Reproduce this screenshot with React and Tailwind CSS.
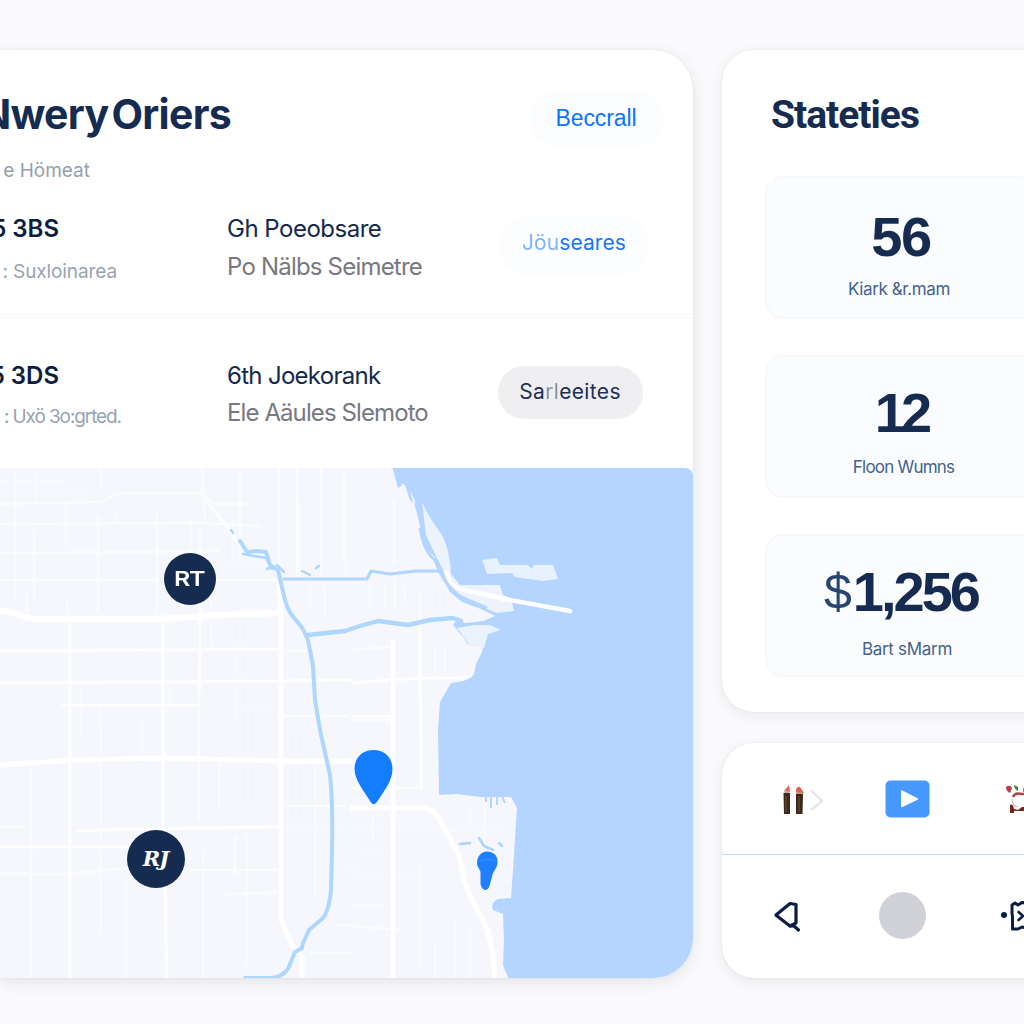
const orders = [
  {
    id: "15 3BS",
    sub: "c : Suxloinarea",
    subClass: "mt-[22.5px] tracking-[-0.1px]",
    name: "Gh Poeobsare",
    nameClass: "tracking-[-0.5px]",
    place: "Po Nälbs Seimetre",
    placeClass: "tracking-[-0.8px]",
  },
  {
    id: "15 3DS",
    sub: "c : Uxö 3o:grted.",
    subClass: "mt-[21px] mr-[-4px] tracking-[-1.1px]",
    name: "6th Joekorank",
    nameClass: "tracking-[-0.7px]",
    place: "Ele Aäules Slemoto",
    placeClass: "tracking-[-0.9px]",
  },
];

function OrderRow({ order, children }) {
  return (
    <div className="flex h-[60px]">
      <div className="flex w-[59px] shrink-0 flex-col items-end whitespace-nowrap">
        <div className="text-[24px] leading-5 font-semibold text-[#0b1d40]">{order.id}</div>
        <div className="-mr-[58px]">
          <div className={"text-[19px] leading-5 text-[#98a2b3] " + order.subClass}>{order.sub}</div>
        </div>
      </div>
      <div className="ml-[168px] w-[270px] shrink-0 whitespace-nowrap text-[24px]">
        <div className={"leading-5 text-[#14294b] " + order.nameClass}>{order.name}</div>
        <div className={"mt-[17.5px] leading-5 text-[#777882] " + order.placeClass}>{order.place}</div>
      </div>
      {children}
    </div>
  );
}

function CityMap() {
  return (
    <svg viewBox="0 468 693 510" className="block h-[510px] w-[693px]" fill="none">
      <defs>
        <filter id="soft" x="-5%" y="-5%" width="110%" height="110%">
          <feGaussianBlur stdDeviation="0.6" />
        </filter>
      </defs>
      <rect x="0" y="468" width="693" height="510" fill="#f5f7fc" />
      <g filter="url(#soft)">
        <g stroke="#ffffff" strokeWidth="1.6" opacity="0.4">
          <path d="M0 481H70M0 490H88M36 468V500M66 500V548M116 512V525M67 600V620M157 510V535M191 520V550M211 590V646M240 620V706M232 520V560M100 706V725M248 706V806M142 720V755M219 760V810M101 722V806M203 850V978M126 880V978M101 806V935M247 835V965M296 735V820M315 760V900M0 828H30M0 875H125M280 826H345M344 870H365M310 575V612M325 585V620M300 500V580M346 480V575" />
          <path d="M15 468V600M81 690V740M60 705H75M52 706H72M220 565H280M236 640V720M230 706H275M222 895H277M170 690V716M352 830H460M352 878H430M430 530V560M420 640V690M435 645V680M445 645V675M370 585V610M385 585V610M405 585V605M440 590V612M373 810V840M420 860V965M435 940V978M455 920V978M470 925V978M360 760H390M485 800V850M470 805V830M356 850H392M352 905H392M396 820H435M480 880H510M455 830H510" />
        </g>
        <g stroke="#ffffff" strokeWidth="2.4" opacity="0.6">
          <path d="M0 504L100 502L120 493H202L215 504H250M0 524L200 523L260 526M0 553L150 552L220 550M0 580H280M101 468V487M98 515V612M34 530V600M27 590V612M202 468L205 523M200 530V560M240 468V560M279 468V580M297 468V580M321 468V575M344 468V560M157 528V612M31 768V978M199 660V820M235 835V875M0 873L60 874L130 868M190 870H280M225 894L278 892M0 827H25M335 925H352M285 806H345M352 788H420M352 926L400 930M350 650L392 647M282 651H310M312 681H350M350 720H392M277 716H350M310 953H350M394 500V565M395 570V610M420 590V725M422 470V500" />
        </g>
        <g stroke="#ffffff" strokeWidth="3" opacity="0.85">
          <path d="M0 651L140 650L280 649M0 683L280 681L352 680M60 705H200M70 623V978M163 620V770M200 590V690M0 847H130M75 831L130 829L280 827M165 885L167 978M163 760V828M352 683L420 678H460L471 676M352 716H394M420 630L421 790" />
        </g>
        <g stroke="#ffffff" strokeLinejoin="round">
          <path d="M0 611C14 610 22 619 36 619L160 619L240 614L281 613" strokeWidth="6.5" />
          <path d="M0 765L75 760L165 758L280 761L352 761" strokeWidth="5" />
          <path d="M279 580L281 615V920L292 945L302 956V978M393 640V978" strokeWidth="5" />
          <path d="M350 808H424Q435 809 441 822L459 855C463 871 464 885 471 898L485 924Q493 942 495 978" strokeWidth="5" />
          <path d="M205 500L222 520L239 544" strokeWidth="3" opacity="0.7" />
        </g>
        <g stroke="#afd6fc" strokeLinecap="round" strokeLinejoin="round">
          <path d="M240 541L247 552L257 551L266 552L270 565L278 570L281 583L285 600C289 616 297 620 303 629L308 640L313 666L315 700L320 730L330 775Q333 800 332 850L331 890Q329 912 322 919L309 930L303 943L302 948L295 952L288 969Q281 978 270 978H245" strokeWidth="4" />
          <path d="M243 554L254 556L266 558L272 569M277 565L284 572M302 571L310 575M316 568L319 566M231 530L233 533M267 569L272 567" strokeWidth="2.5" />
          <path d="M284 579H367L371 571L390 574L416 571H438L447 576" strokeWidth="3.2" />
          <path d="M308 635L345 631L360 626L378 621L408 625L430 620L453 618L461 621" strokeWidth="4.4" />
        </g>
        <path
          d="M392 466L398 488L403 485L410 500L415 506L421 530L425 548L435 557L440 573L450 592L462 602L481 609L495 616L483 621L466 623L456 621L453 625L464 638L468 645L475 634L486 633L482 652L476 664L474 674Q471 681 451 683L440 702L438 730L439 795L457 794L480 797H511L517 808L513 870L511 898L498 899Q490 903 493 910L503 914L504 940L503 965L509 980H695V466Z"
          fill="#b3d5ff"
        />
        <path d="M457 628L475 625L490 625L501 630L488 634L484 648L470 646L461 633Z" fill="#eaf2fd" />
        <path d="M422 502L429 516L443 537Q450 552 451 574L460 585L500 585L503 595L511 598L514 611L497 613L482 607L467 600Q453 591 447 578L435 554L426 535Z" fill="#edf3fd" />
        <path d="M401 483L405 485L412 507L408 505ZM410 490L415 501L414 508Z" fill="#f4f6fc" />
        <path d="M420 528Q424 552 435 560Q442 580 455 594L487 608" stroke="#b3d5ff" strokeWidth="3" />
        <path d="M446 572Q450 586 460 589L505 599L570 611" stroke="#ffffff" strokeWidth="4.5" strokeLinecap="round" />
        <path d="M482 560L497 558L500 565H528L532 569L534 565L553 565L558 579L543 581L515 577L512 573L487 574Z" fill="#e8f1fe" />
        <path d="M491 795V808M497 795V805M486 795V802M502 796L505 803" stroke="#b3d5ff" strokeWidth="2" />
        <path d="M479 838L484 846L493 850M460 844L470 843M499 843L502 846" stroke="#aed3fb" strokeWidth="2.5" strokeLinecap="round" />
      </g>
      <path d="M373.500 750C362 750 354.500 758 354.500 769C354.500 780 364 791 371 802.500Q374 806 377 802C386 788 392.500 780 392.500 769C392.500 758 385 750 373.500 750Z" fill="#147cff" />
      <path d="M487 851.500C481 851.500 477 857 477 863C477 867 480 869 480.500 872L480.500 884Q482 890 486 890Q489 889 490 884L493 873L496.500 867Q499 860 495.500 855Q492 851.500 487 851.500Z" fill="#207fff" />
      <path d="M481 861Q487 858 495 861" stroke="#3a90ff" strokeWidth="1.500" />
    </svg>
  );
}

function LipstickIcon() {
  return (
    <svg viewBox="780 778 46 36" className="h-9 w-[46px]">
      <path d="M784 788L789 782L790 789ZM796 787Q797 783 800 784L804 790H796Z" fill="#e9604f" />
      <path d="M785 786L790 790V793H784ZM796 789L803 790V794H796Z" fill="#b6a69a" />
      <path d="M783.500 790H790V811H784ZM796 791H803L802.500 811H796Z" fill="#3d2819" />
      <path d="M786 793V809M799 793V809" stroke="#6b4b34" strokeWidth="1.200" />
      <path d="M811 787L822 798L811 807" stroke="#e6e6e6" strokeWidth="2.400" fill="none" />
    </svg>
  );
}

function PlayIcon() {
  return (
    <svg viewBox="885 779 45 38" className="h-[38px] w-[45px]">
      <rect x="885.500" y="779.500" width="44" height="37" rx="5" fill="#4798ff" />
      <path d="M901.500 789.500L918 798L901.500 806Z" fill="#fff" stroke="#fff" strokeWidth="1" strokeLinejoin="round" />
    </svg>
  );
}

function DessertIcon() {
  return (
    <svg viewBox="1004 780 40 34" className="h-[34px] w-10">
      <path d="M1006 785Q1010 782 1012 786L1010 791Q1006 789 1006 785Z" fill="#bf3a45" />
      <path d="M1014 783L1018 785L1018 789Q1014 787 1014 783Z" fill="#3f8049" />
      <path d="M1023 786Q1028 783 1029 790L1023 790Z" fill="#e46a70" />
      <path d="M1013 795Q1015 790 1022 792L1030 792" stroke="#a8464a" strokeWidth="2.500" fill="none" />
      <path d="M1010 803Q1013 801 1014 807L1018 808L1022 805L1034 805V809L1014 809V811H1010Z" fill="#71261e" />
      <path d="M1012 797Q1012 804 1018 805" stroke="#d4bab6" strokeWidth="1.200" fill="none" />
    </svg>
  );
}

function BackIcon() {
  return (
    <svg viewBox="772 897 32 34" className="h-[34px] w-8" fill="none" stroke="#0b1d40" strokeWidth="3.200" strokeLinecap="round" strokeLinejoin="round">
      <path d="M776 913L790 901.500L796 902.500V921L790 924L777 914Z" />
      <path d="M790 924H794L798.500 928" />
    </svg>
  );
}

function TicketIcon() {
  return (
    <svg viewBox="1000 896 44 38" className="h-[38px] w-11" fill="none" stroke="#0b1d40" strokeWidth="3" strokeLinecap="round" strokeLinejoin="round">
      <circle cx="1004" cy="914" r="1.500" fill="#0b1d40" />
      <path d="M1012 904L1015 902L1018 904L1022 901.500L1030 902L1034 904V928L1026 927L1022 926L1018 928L1012.500 928V916L1012 912Z" />
      <path d="M1018.500 911L1023 915L1018.500 919" strokeWidth="2.600" />
    </svg>
  );
}

function Stat({ value, label, labelClass }) {
  return (
    <div className="flex h-[143px] w-[272px] flex-col items-center rounded-[18px] border-2 border-[#f7f8fa] bg-[#fbfcfe] whitespace-nowrap">
      {value}
      <div className={"text-[17px] leading-5 text-[#43638b] " + labelClass}>{label}</div>
    </div>
  );
}

const numberClass = "font-['Liberation_Sans',sans-serif] font-bold text-[#162b50] leading-[40px]";

export default function App() {
  return (
    <div className="h-[1024px] w-[1024px] overflow-hidden bg-[#fafafc] font-['Inter',sans-serif]">
      <div className="flex gap-[29px] pt-[50px]">
        <section className="h-[928px] w-[693px] shrink-0 overflow-hidden rounded-r-[40px] bg-white shadow-[0_4px_16px_rgba(30,35,50,0.10),0_0_2px_rgba(30,35,50,0.08)]">
          <header className="flex h-[168px] justify-between pt-[41px]">
            <div className="flex w-[231px] flex-col items-end whitespace-nowrap">
              <h1 className="mt-[3px] text-[41px] leading-10 font-bold tracking-[-0.7px] text-[#162b50] [word-spacing:-6px]">Nwery Oriers</h1>
              <p className="mt-[27px] mr-[141px] text-[19px] leading-5 text-[#959eae]">e Hömeat</p>
            </div>
            <button className="mr-[30px] flex h-[55px] w-[133px] items-center justify-center rounded-[24px] bg-[#fcfdff] pr-px pb-px font-['Liberation_Sans',sans-serif] text-[23px] tracking-[-0.1px] text-[#0b74ff]">
              Beccrall
            </button>
          </header>
          <div className="h-[96px] pt-px">
            <OrderRow order={orders[0]}>
              <button className="mt-[-3px] ml-[2px] flex h-[59px] w-[150px] items-center justify-center rounded-[28px] bg-[#fcfdff] pb-[6px] text-[21px] tracking-[0.1px] text-[#1676ff]">
                <span className="opacity-55">Jöu</span>seares
              </button>
            </OrderRow>
          </div>
          <div className="h-[4px] border-y border-[#f8f9fa]" />
          <div className="h-[100px] pt-[47.500px]">
            <OrderRow order={orders[1]}>
              <button className="ml-px flex h-[53px] w-[145px] items-center justify-center rounded-[26px] bg-[#efeff2] pr-px text-[21px] tracking-[0.35px] text-[#1e2f51]">
                Sa<span className="opacity-50">rl</span>eeites
              </button>
            </OrderRow>
          </div>
          <div className="relative mt-[50px] h-[510px] overflow-hidden rounded-tr-[8px]">
            <CityMap />
            <div className="absolute top-[84.5px] left-[163.500px] flex size-[52px] items-center justify-center rounded-full bg-[#162b50]">
              <span className="scale-x-125 text-[20px] font-semibold tracking-[-1px] text-white">RT</span>
            </div>
            <div className="absolute top-[361.500px] left-[126.500px] flex size-[58px] items-center justify-center rounded-full bg-[#162b50]">
              <span className="font-['DejaVu_Serif',serif] text-[21px] font-bold tracking-[-1px] text-white italic">RJ</span>
            </div>
          </div>
        </section>

        <div className="flex w-[360px] shrink-0 flex-col gap-[31px]">
          <section className="h-[662px] rounded-[32px] bg-white pl-[43px] shadow-[0_4px_14px_rgba(30,35,50,0.07),0_0_2px_rgba(30,35,50,0.08)]">
            <h2 className="pt-[45px] pl-[6px] font-['Roboto',sans-serif] text-[39px] leading-10 font-bold tracking-[-1px] text-[#162b50]">Stateties</h2>
            <div className="mt-[41px] flex flex-col gap-[36px]">
              <Stat
                label="Kiark &r.mam"
                labelClass="mt-[22px] tracking-[-0.4px] mr-[4px]"
                value={<div className={"mt-[38.500px] text-[56px] tracking-[-1.500px] " + numberClass}>56</div>}
              />
              <Stat
                label="Floon Wumns"
                labelClass="mt-[24px] tracking-[-0.8px] ml-[5px]"
                value={<div className={"mt-[36px] text-[56px] tracking-[-5px] " + numberClass}>12</div>}
              />
              <Stat
                label="Bart sMarm"
                labelClass="mt-[27px] tracking-[-0.3px] ml-[12px]"
                value={
                  <div className={"mt-[36px] flex text-[56px] " + numberClass}>
                    <span className="mr-px text-[50px] font-normal text-[#264670]">$</span>
                    <span className="tracking-[-3px]">1,256</span>
                  </div>
                }
              />
            </div>
          </section>
          <section className="h-[235px] rounded-[32px] bg-white shadow-[0_4px_14px_rgba(30,35,50,0.08),0_0_2px_rgba(30,35,50,0.10)]">
            <div className="flex h-[112px] items-center border-b border-[#c8d8ea] pl-[58px]">
              <LipstickIcon />
              <div className="ml-[59px]"><PlayIcon /></div>
              <div className="ml-[74px]"><DessertIcon /></div>
            </div>
            <div className="flex h-[121px] items-center pl-[50px]">
              <BackIcon />
              <div className="ml-[75px] size-[47px] rounded-full bg-[#d0d2d8]" />
              <div className="ml-[74px]"><TicketIcon /></div>
            </div>
          </section>
        </div>
      </div>
    </div>
  );
}
